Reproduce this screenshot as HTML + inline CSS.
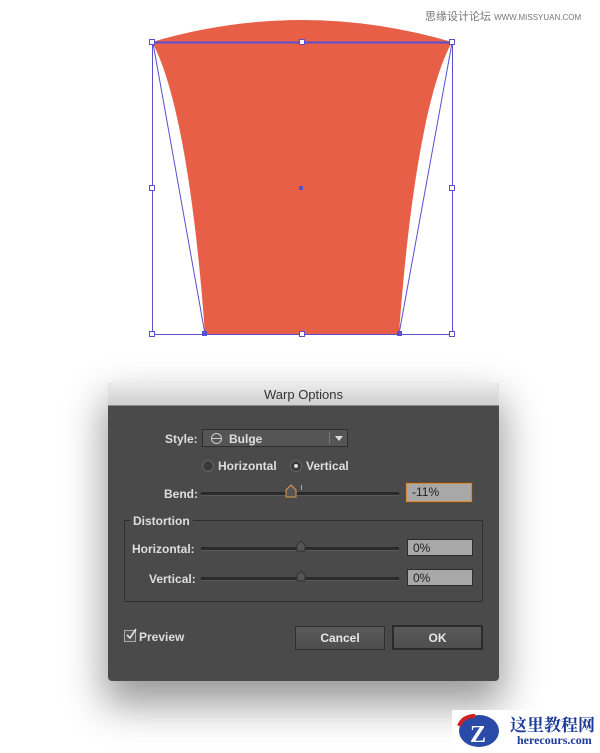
<!DOCTYPE html>
<html><head><meta charset="utf-8"><style>
body{margin:0;width:600px;height:753px;background:#fff;position:relative;overflow:hidden;font-family:"Liberation Sans","Noto Sans CJK SC",sans-serif}
.abs{position:absolute}
.dlg{left:108px;top:383px;width:391px;height:298px;background:#4a4a4a;border-radius:4px;box-shadow:0 20px 40px 4px rgba(0,0,0,.4);overflow:hidden}
.title{left:0;top:0;width:391px;height:22px;background:linear-gradient(#ececec,#cfcfcf);border-bottom:1px solid #888;text-align:center;font-size:13px;line-height:23px;color:#333}
.lbl{color:#dedede;font-size:12px;font-weight:bold}
.track{height:3px;background:#2a2a2a;border-bottom:1px solid #5a5a5a}
.field{background:#a8a8a8;border:1px solid #2c2c2c;font-size:12px;color:#222;line-height:16px;padding-left:5px;box-sizing:border-box}
.btn{background:linear-gradient(#5a5a5a,#4e4e4e);border:1px solid #2e2e2e;color:#e8e8e8;font-size:12px;font-weight:bold;text-align:center;box-sizing:border-box}
</style></head><body>
<div class="abs" style="left:425px;top:8px;font-size:11px;color:#777">思缘设计论坛 <span style="font-size:8px">WWW.MISSYUAN.COM</span></div>
<svg class="abs" style="left:0;top:0" width="600" height="360">
<path d="M152,42 Q302,-2 452,42 C420,100 405,250 399,334 L205,334 C199,250 184,100 152,42Z" fill="#e85f48"/>
<g stroke="#5a4fcf" stroke-width="1" fill="none">
<rect x="152.5" y="42.5" width="300" height="292"/>
<line x1="152.5" y1="42.5" x2="452.5" y2="42.5" stroke-width="2"/>
<line x1="153" y1="43" x2="205" y2="334"/>
<line x1="452" y1="43" x2="399" y2="334"/>
</g>
<g fill="#fff" stroke="#5a4fcf">
<rect x="149.5" y="39.5" width="5" height="5"/><rect x="299.5" y="39.5" width="5" height="5"/><rect x="449.5" y="39.5" width="5" height="5"/>
<rect x="149.5" y="185.5" width="5" height="5"/><rect x="449.5" y="185.5" width="5" height="5"/>
<rect x="149.5" y="331.5" width="5" height="5"/><rect x="299.5" y="331.5" width="5" height="5"/><rect x="449.5" y="331.5" width="5" height="5"/>
</g>
<rect x="299" y="186" width="4" height="4" fill="#5a4fcf"/>
<rect x="202" y="331" width="5" height="5" fill="#5a4fcf"/><rect x="397" y="331" width="5" height="5" fill="#5a4fcf"/>
</svg>
<div class="abs dlg">
<div class="abs title">Warp Options</div>
<div class="abs lbl" style="left:57px;top:49px">Style:</div>
<div class="abs" style="left:94px;top:46px;width:146px;height:18px;border:1px solid #2e2e2e;background:#555;box-sizing:border-box"></div>
<div class="abs" style="left:103px;top:50px;width:9px;height:9px;border:1px solid #ccc;border-radius:50%"></div>
<div class="abs" style="left:103px;top:55px;width:11px;height:1px;background:#ccc"></div>
<div class="abs lbl" style="left:121px;top:49px">Bulge</div>
<div class="abs" style="left:221px;top:49px;width:1px;height:12px;background:#777"></div>
<div class="abs" style="left:227px;top:53px;border-left:4px solid transparent;border-right:4px solid transparent;border-top:5px solid #ddd"></div>
<div class="abs" style="left:94px;top:77px;width:10px;height:10px;border-radius:50%;background:#3a3a3a;border:1px solid #666"></div>
<div class="abs lbl" style="left:110px;top:76px">Horizontal</div>
<div class="abs" style="left:182px;top:77px;width:10px;height:10px;border-radius:50%;background:#3a3a3a;border:1px solid #666"></div>
<div class="abs" style="left:186px;top:81px;width:4px;height:4px;border-radius:50%;background:#ddd"></div>
<div class="abs lbl" style="left:198px;top:76px">Vertical</div>
<div class="abs lbl" style="left:56px;top:104px">Bend:</div>
<div class="abs track" style="left:93px;top:109px;width:198px"></div>
<div class="abs" style="left:193px;top:102px;width:1px;height:5px;background:#aaa"></div>
<svg class="abs" style="left:177px;top:101px" width="12" height="14"><path d="M1,13 V6 L6,1 L11,6 V13Z" fill="#555" stroke="#e09a4a"/></svg>
<div class="abs field" style="left:298px;top:100px;width:66px;height:19px;border:1px solid #d48a3a;box-shadow:0 0 0 1px #6a4a2a">-11%</div>
<div class="abs" style="left:16px;top:137px;width:359px;height:82px;border:1px solid #2f2f2f;box-sizing:border-box"></div>
<div class="abs lbl" style="left:22px;top:131px;background:#4a4a4a;padding:0 3px">Distortion</div>
<div class="abs lbl" style="left:24px;top:159px">Horizontal:</div>
<div class="abs track" style="left:93px;top:164px;width:198px"></div>
<svg class="abs" style="left:188px;top:157px" width="10" height="12"><path d="M1,11 V5 L5,1 L9,5 V11Z" fill="#555" stroke="#333"/></svg>
<div class="abs field" style="left:299px;top:156px;width:66px;height:17px">0%</div>
<div class="abs lbl" style="left:41px;top:189px">Vertical:</div>
<div class="abs track" style="left:93px;top:194px;width:198px"></div>
<svg class="abs" style="left:188px;top:187px" width="10" height="12"><path d="M1,11 V5 L5,1 L9,5 V11Z" fill="#555" stroke="#333"/></svg>
<div class="abs field" style="left:299px;top:186px;width:66px;height:17px">0%</div>
<div class="abs" style="left:16px;top:247px;width:10px;height:10px;background:#555;border:1px solid #aaa"></div>
<svg class="abs" style="left:16px;top:244px" width="14" height="14"><path d="M3,8 L6,11 L12,2" stroke="#eee" stroke-width="1.5" fill="none"/></svg>
<div class="abs lbl" style="left:31px;top:247px">Preview</div>
<div class="abs btn" style="left:187px;top:243px;width:90px;height:24px;line-height:22px">Cancel</div>
<div class="abs btn" style="left:284px;top:242px;width:91px;height:25px;line-height:23px;border:2px solid #2a2a2a">OK</div>
</div>
<div class="abs" style="left:452px;top:710px;width:148px;height:43px;background:#fff"></div>
<svg class="abs" style="left:455px;top:712px" width="50" height="38"><ellipse cx="24" cy="19" rx="20" ry="16" fill="#2a4aa8"/><path d="M4,14 Q8,4 20,4" stroke="#c22" stroke-width="4" fill="none"/><text x="15" y="30" font-size="24" font-weight="bold" fill="#fff" font-family="Liberation Serif">Z</text></svg>
<div class="abs" style="left:510px;top:711px;font-size:17px;font-weight:bold;color:#1a3a9a;font-family:'Liberation Sans','Noto Serif CJK SC',serif">这里教程网</div>
<div class="abs" style="left:517px;top:733px;font-size:12px;font-weight:bold;color:#1a3a9a;font-family:'Liberation Serif',serif">herecours.com</div>
</body></html>
